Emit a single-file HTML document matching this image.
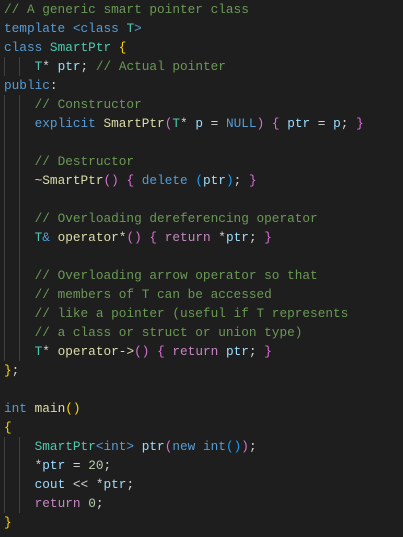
<!DOCTYPE html><html><head><style>
body{margin:0;width:403px;height:537px;background:#1e1e1e;overflow:hidden;position:relative}
pre{margin:0;position:absolute;left:4px;top:0;font-family:"Liberation Mono",monospace;font-size:12.75px;line-height:19px;color:#d4d4d4}
.c{color:#6a9955}.k{color:#569cd6}.t{color:#4ec9b0}.v{color:#9cdcfe}.f{color:#dcdcaa}.g{color:#ffd700}.p{color:#da70d6}.b{color:#179fff}.r{color:#c586c0}.n{color:#b5cea8}
.gl{position:absolute;width:1px;background:#404040}
</style></head><body>
<div class="gl" style="left:4px;top:57px;height:19px"></div>
<div class="gl" style="left:19px;top:57px;height:19px"></div>
<div class="gl" style="left:4px;top:95px;height:266px"></div>
<div class="gl" style="left:19px;top:95px;height:266px"></div>
<div class="gl" style="left:4px;top:437px;height:76px"></div>
<div class="gl" style="left:19px;top:437px;height:76px"></div>
<pre><span class="c">// A generic smart pointer class</span>
<span class="k">template</span> <span class="k">&lt;class</span> <span class="t">T</span><span class="k">&gt;</span>
<span class="k">class</span> <span class="t">SmartPtr</span> <span class="g">{</span>
    <span class="t">T</span>* <span class="v">ptr</span>; <span class="c">// Actual pointer</span>
<span class="k">public</span>:
    <span class="c">// Constructor</span>
    <span class="k">explicit</span> <span class="f">SmartPtr</span><span class="p">(</span><span class="t">T</span>* <span class="v">p</span> = <span class="k">NULL</span><span class="p">)</span> <span class="p">{</span> <span class="v">ptr</span> = <span class="v">p</span>; <span class="p">}</span>

    <span class="c">// Destructor</span>
    <span class="f">~SmartPtr</span><span class="p">()</span> <span class="p">{</span> <span class="k">delete</span> <span class="b">(</span><span class="v">ptr</span><span class="b">)</span>; <span class="p">}</span>

    <span class="c">// Overloading dereferencing operator</span>
    <span class="t">T</span><span class="k">&amp;</span> <span class="f">operator*</span><span class="p">()</span> <span class="p">{</span> <span class="r">return</span> *<span class="v">ptr</span>; <span class="p">}</span>

    <span class="c">// Overloading arrow operator so that</span>
    <span class="c">// members of T can be accessed</span>
    <span class="c">// like a pointer (useful if T represents</span>
    <span class="c">// a class or struct or union type)</span>
    <span class="t">T</span>* <span class="f">operator-&gt;</span><span class="p">()</span> <span class="p">{</span> <span class="r">return</span> <span class="v">ptr</span>; <span class="p">}</span>
<span class="g">}</span>;

<span class="k">int</span> <span class="f">main</span><span class="g">()</span>
<span class="g">{</span>
    <span class="t">SmartPtr</span><span class="k">&lt;int&gt;</span> <span class="v">ptr</span><span class="p">(</span><span class="k">new</span> <span class="k">int</span><span class="b">()</span><span class="p">)</span>;
    *<span class="v">ptr</span> = <span class="n">20</span>;
    <span class="v">cout</span> &lt;&lt; *<span class="v">ptr</span>;
    <span class="r">return</span> <span class="n">0</span>;
<span class="g">}</span></pre>
</body></html>
